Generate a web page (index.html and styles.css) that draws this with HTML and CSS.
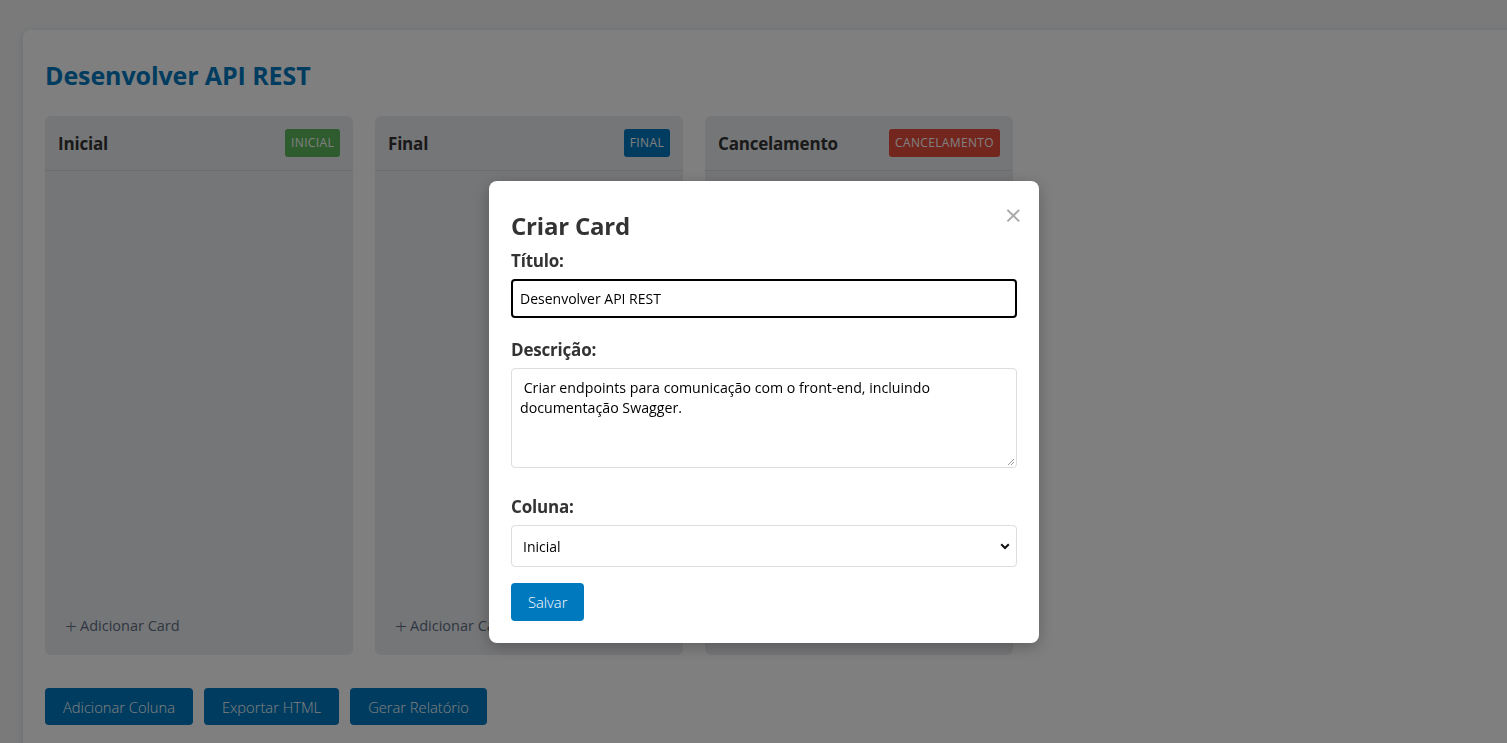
FILE: index.html
```html
<!DOCTYPE html>
<html lang="pt-BR">
<head>
<meta charset="utf-8">
<title>Kanban</title>
<link rel="stylesheet" href="styles.css">
</head>
<body>
<div class="board-wrap">
  <h1 class="board-title">Desenvolver API REST</h1>
  <div class="columns">
    <section class="column">
      <header class="col-head"><h2>Inicial</h2><span class="badge badge-green">INICIAL</span></header>
      <div class="col-body"></div>
      <div class="add-card"><span class="plus">+</span>Adicionar Card</div>
    </section>
    <section class="column">
      <header class="col-head"><h2>Final</h2><span class="badge badge-blue">FINAL</span></header>
      <div class="col-body"></div>
      <div class="add-card"><span class="plus">+</span>Adicionar Card</div>
    </section>
    <section class="column">
      <header class="col-head"><h2>Cancelamento</h2><span class="badge badge-red">CANCELAMENTO</span></header>
      <div class="col-body"></div>
      <div class="add-card"><span class="plus">+</span>Adicionar Card</div>
    </section>
  </div>
  <div class="actions">
    <button class="btn">Adicionar Coluna</button>
    <button class="btn">Exportar HTML</button>
    <button class="btn">Gerar Relatório</button>
  </div>
</div>

<div class="overlay">
  <div class="modal">
    <span class="close">&times;</span>
    <h2 class="modal-title">Criar Card</h2>
    <label class="label">Título:</label>
    <div class="input focus">Desenvolver API REST</div>
    <label class="label">Descrição:</label>
    <div class="textarea"> Criar endpoints para comunicação com o front-end, incluindo documentação Swagger.<svg class="grip" width="8" height="8" viewBox="0 0 8 8"><path d="M7 1L1 7M7 4L4 7" stroke="#999" stroke-width="1"/></svg></div>
    <label class="label label-col">Coluna:</label>
    <div class="select">Inicial<svg class="chev" width="10" height="7" viewBox="0 0 10 7"><path d="M1.2 1.2L5 5L8.8 1.2" fill="none" stroke="#111" stroke-width="2"/></svg></div>
    <button class="btn-save">Salvar</button>
  </div>
</div>
</body>
</html>
```

FILE: styles.css
```css
* { box-sizing: border-box; }
html, body { margin: 0; height: 100%; }
body {
  background: #f4f5f7;
  font-family: "Open Sans", "Noto Sans", sans-serif;
  color: #172b4d;
  overflow: hidden;
  padding: 30px 0 0 23px;
}
.board-wrap {
  width: 1520px;
  height: 760px;
  background: #fff;
  border-radius: 8px;
  box-shadow: 0 2px 10px rgba(0,0,0,0.12);
  padding: 28px 22px;
}
.board-title {
  margin: 0 0 24px;
  font-size: 25px;
  font-weight: 700;
  color: #0079bf;
  line-height: 34px;
  letter-spacing: -0.1px;
}
.columns {
  display: flex;
  gap: 22px;
  align-items: flex-start;
}
.column {
  width: 308px;
  height: 539px;
  background: #ebecf0;
  border-radius: 6px;
  display: flex;
  flex-direction: column;
}
.col-head {
  display: flex;
  align-items: center;
  justify-content: space-between;
  height: 55px;
  padding: 0 13px;
  border-bottom: 1px solid #d6d8dd;
}
.col-head h2 {
  margin: 0;
  font-size: 17px;
  font-weight: 700;
  color: #333;
  letter-spacing: -0.2px;
}
.badge {
  font-size: 12px;
  color: #fff;
  padding: 0 6px;
  height: 28px;
  line-height: 28px;
  border-radius: 3px;
  font-weight: 400;
  letter-spacing: 0.35px;
}
.badge-green { background: #5cb85c; }
.badge-blue { background: #0079bf; }
.badge-red { background: #e74c3c; }
.col-body { flex: 1; }
.add-card {
  padding: 0 20px 20px;
  font-size: 14.5px;
  color: #5e6c84;
  display: flex;
  align-items: center;
  gap: 3px;
}
.plus { font-size: 21px; line-height: 18px; font-weight: 300; }
.actions {
  display: flex;
  gap: 11px;
  margin-top: 33px;
}
.btn, .btn-save {
  background: #0079bf;
  color: #fff;
  border: 0;
  border-radius: 4px;
  font-family: "Open Sans", "Noto Sans", sans-serif;
  font-size: 14.7px;
  font-weight: 300;
  height: 37px;
  padding: 0 18px;
}
.overlay {
  position: fixed;
  inset: 0;
  background: rgba(0,0,0,0.5);
}
.modal {
  position: relative;
  margin: 181px 0 0 489px;
  width: 550px;
  height: 462px;
  background: #fff;
  border-radius: 8px;
  box-shadow: 0 4px 16px rgba(0,0,0,0.25);
  padding: 27px 22px 22px;
  color: #333;
}
.close {
  position: absolute;
  right: 17px;
  top: 19px;
  font-size: 30px;
  line-height: 30px;
  color: #aaa;
  font-weight: 400;
}
.modal-title {
  margin: 0 0 6px;
  font-size: 24px;
  font-weight: 700;
  line-height: 36px;
  color: #333;
  letter-spacing: -0.2px;
}
.label {
  display: block;
  font-size: 17px;
  font-weight: 700;
  line-height: 22px;
  margin-bottom: 7px;
  letter-spacing: -0.2px;
}
.label-col { margin-top: 28px; }
.input {
  height: 39px;
  border: 2px solid #000;
  border-radius: 4px;
  font-size: 14px;
  line-height: 35px;
  padding: 0 7px;
  color: #000;
  margin: 1px 0 21px;
}
.textarea {
  position: relative;
  height: 100px;
  border: 1px solid #ddd;
  border-radius: 4px;
  font-size: 14.2px;
  line-height: 20px;
  padding: 9px 8px;
  color: #000;
  white-space: pre-wrap;
}
.grip { position: absolute; right: 1px; bottom: 1px; }
.select {
  height: 42px;
  border: 1px solid #ddd;
  border-radius: 4px;
  font-size: 14px;
  padding: 0 11px;
  display: flex;
  align-items: center;
  justify-content: space-between;
  color: #000;
  margin-bottom: 16px;
}
.chev { margin-right: -5px; }
.btn-save {
  height: 38px;
  padding: 0 17px;
}
```
